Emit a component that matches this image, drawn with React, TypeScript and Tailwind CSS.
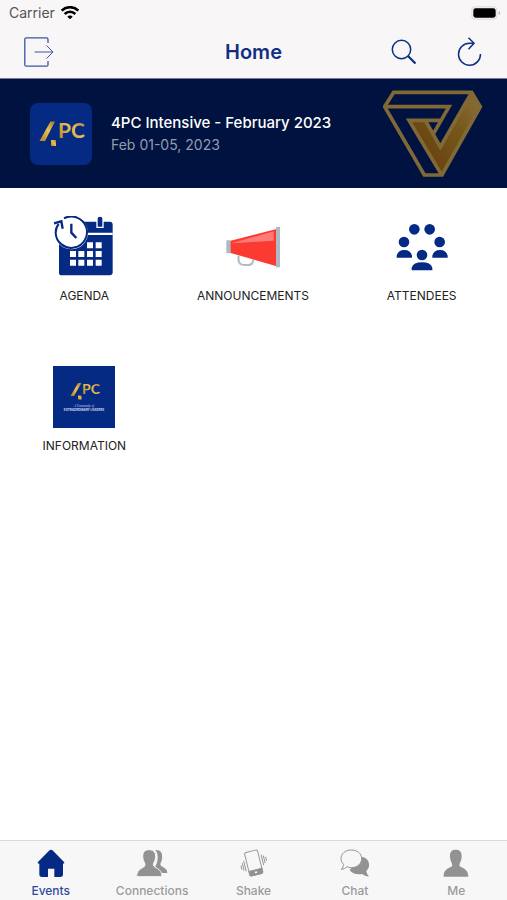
import type { ReactNode } from "react";

function WifiIcon() {
  return (
    <svg viewBox="0 0 54 42" className="h-3.5 w-[18px]" fill="none" stroke="#000" strokeWidth="7.5">
      <path d="M2 14C16 0 38 0 52 14" />
      <path d="M11 24c9-9 23-9 32 0" />
      <path d="M27 40l-8-8c4-5 12-5 16 0z" fill="#000" stroke="none" />
    </svg>
  );
}

function BatteryIcon() {
  return (
    <svg viewBox="0 0 90 42" className="h-3.5 w-[30px]">
      <rect x="1" y="1" width="78" height="40" rx="12" fill="#dededd" />
      <rect x="4" y="4" width="72" height="34" rx="10" fill="#f4f2f3" />
      <rect x="7" y="7" width="67" height="28" rx="7" fill="#000" />
      <path d="M83 15c6 2 6 10 0 12z" fill="#b5b5b5" />
    </svg>
  );
}

function LeaveIcon() {
  return (
    <svg viewBox="0 0 30 30" className="h-[30px] w-[30px]" fill="none" stroke="#3d54a3" strokeWidth="1.3">
      <path d="M24 6V2.500C24 1.300 23.500.8 22.500.8H2.300C1.300.8.8 1.300.8 2.300v25.400c0 1 .5 1.500 1.500 1.500h20.200c1 0 1.500-.5 1.500-1.500V24" />
      <path d="M10.500 15H29M22.500 8.500 29 15l-6.500 6.500" strokeWidth="1" />
    </svg>
  );
}

function SearchIcon() {
  return (
    <svg viewBox="0 0 26 26" className="h-[26px] w-[26px]" fill="none" stroke="#0d2f86">
      <circle cx="10.500" cy="10.500" r="9.200" strokeWidth="1.500" />
      <path d="m17 17 7.500 7.500" strokeWidth="2.200" />
    </svg>
  );
}

function RefreshIcon() {
  return (
    <svg viewBox="0 0 26 30" className="h-[30px] w-[26px]" fill="none" stroke="#0d2f86" strokeWidth="1.500">
      <path d="M23.500 17A11 11 0 1 1 12.500 6.200H17" />
      <path d="m11.500.8 5.500 5.400-5.500 6" />
    </svg>
  );
}

function GoldGradient({ id }: { id: string }) {
  return (
    <linearGradient id={id} x1="0" y1="1" x2="1" y2="0">
      <stop offset="0" stopColor="#b77d1f" />
      <stop offset=".55" stopColor="#eac057" />
      <stop offset="1" stopColor="#a8752a" />
    </linearGradient>
  );
}

function EventLogo() {
  return (
    <svg viewBox="0 0 62 62" className="h-[62px] w-[62px] shrink-0 rounded-lg bg-[#052a84]" role="img" aria-label="4PC">
      <defs>
        <GoldGradient id="gold-event" />
      </defs>
      <g fill="url(#gold-event)">
        <path d="M9.500 38 20.500 18.500H25L15 38z" />
        <path d="M21 37h5v6h-5z" />
        <text x="28" y="35" fontSize="21" fontWeight="700" fontFamily="Lato, sans-serif">
          PC
        </text>
      </g>
    </svg>
  );
}

function PenroseMark() {
  return (
    <svg viewBox="38 34 300 264" className="h-[88px] w-[100px] shrink-0" fill="none" stroke="#806936" strokeWidth="11">
      <defs>
        <linearGradient id="facet" x1=".2" y1=".7" x2="1" y2="0">
          <stop offset="0" stopColor="#6a4410" />
          <stop offset=".5" stopColor="#765719" />
          <stop offset="1" stopColor="#8a713e" />
        </linearGradient>
      </defs>
      <path d="M304 41 332 84 215 289 116 125h49l45 80z" fill="url(#facet)" stroke="none" />
      <path d="M70 41h234l26 43-115 205h-53L43 84z" />
      <path d="M43 84h193l-46 80" />
      <path d="M304 41 210 205l-45-80" />
      <path d="M212 125h-96l97 162" />
    </svg>
  );
}

function AgendaIcon() {
  return (
    <svg viewBox="40 33 186 186" className="h-[62px] w-[62px]" fill="#052a84">
      <path d="M58 60q0-10 10-10h142q9 0 9 9v143q0 9-9 9H66q-8 0-8-8z" />
      <path d="M58 83h161v7H58z" fill="#fff" />
      <path d="M172 40q0-7 9-7t9 7v27h-18z" stroke="#fff" strokeWidth="4" />
      <circle cx="95" cy="83" r="50" fill="#fff" />
      <path d="M73 40A47 47 0 1 1 48 83q0-15 9-26" fill="none" stroke="#052a84" strokeWidth="6" />
      <path d="m43 55 22-6 4 22" fill="none" stroke="#052a84" strokeWidth="7" />
      <path d="M95 56v27l15 16" fill="none" stroke="#052a84" strokeWidth="7" />
      <path
        d="M142 112h18v18h-18zm26 0h18v18h-18zM91 138h18v18H91zm25 0h18v18h-18zm26 0h18v18h-18zm26 0h18v18h-18zM91 164h18v18H91zm25 0h18v18h-18zm26 0h18v18h-18zm26 0h18v18h-18z"
        fill="#fff"
      />
    </svg>
  );
}

function MegaphoneIcon() {
  return (
    <svg viewBox="95 33 186 186" className="h-[62px] w-[62px]">
      <path d="M145 152q-5 28 18 28h11q14 0 15-16" fill="none" stroke="#aebdc6" strokeWidth="6" />
      <path d="m118 108 141-36v112l-141-41z" fill="#fb3b31" />
      <path d="m123 115 127-36v28z" fill="#ff7d76" />
      <path d="M108 106h13v39h-13zM257 66h12v121h-12z" fill="#adbac5" />
    </svg>
  );
}

function AttendeesIcon() {
  return (
    <svg viewBox="61 33 186 186" className="h-[62px] w-[62px]" fill="#052a84">
      <circle cx="131" cy="73" r="16" />
      <circle cx="177" cy="73" r="16" />
      <circle cx="100" cy="111" r="16" />
      <circle cx="207" cy="111" r="16" />
      <circle cx="154" cy="150" r="16" />
      <path d="M78 158v-6q4-17 23-17t23 17v6zM185 158v-6q4-17 23-17t23 17v6zM123 196v-8q5-16 31-16t31 16v8z" />
    </svg>
  );
}

function InformationIcon() {
  return (
    <svg viewBox="0 0 62 62" className="h-[62px] w-[62px] bg-[#052a84]">
      <defs>
        <GoldGradient id="gold-info" />
      </defs>
      <g fill="url(#gold-info)">
        <path d="m17.500 30 7.500-13h3.500l-7.500 13z" />
        <path d="M25 29.500h3.500v4H25z" />
        <text x="29" y="28" fontSize="14" fontWeight="700" fontFamily="Lato, sans-serif">
          PC
        </text>
      </g>
      <g fill="#d5dcee" textAnchor="middle">
        <text x="31" y="41" fontSize="3" fontStyle="italic" fontFamily="Liberation Serif, serif">
          A Community of
        </text>
        <text x="31" y="45" fontSize="3" fontWeight="700" fontFamily="Inter, sans-serif">
          EXTRAORDINARY LEADERS
        </text>
      </g>
    </svg>
  );
}

function HomeTabIcon() {
  return (
    <svg viewBox="112 42 84 84" className="h-7 w-7" fill="#052a84">
      <path d="M154 44q3 0 6 3l33 34q3 5-3 5v32q0 8-8 8h-18v-25h-19v25h-18q-8 0-8-8V86q-7 0-4-5l33-34q3-3 6-3z" />
    </svg>
  );
}

function ConnectionsTabIcon() {
  return (
    <svg viewBox="411 42 94 84" className="h-7 w-8" fill="#929292">
      <path d="M468 45c16-1 23 9 20 27-1 8-5 11-5 16 0 10 21 8 21 26h-20c-5-10-17-10-18-16 8-11 15-38 2-53z" />
      <path
        d="M449 44c16 0 22 10 19 27-1 8-6 12-6 18 0 12 26 8 26 36h-76c0-28 25-24 25-36 0-6-5-10-6-18-3-17 3-27 18-27z"
        stroke="#f7f7f7"
        strokeWidth="3"
      />
    </svg>
  );
}

function ShakeTabIcon() {
  return (
    <svg viewBox="89 40 86 88" className="h-7 w-7" fill="none" stroke="#929292" strokeWidth="3">
      <g transform="rotate(-14 131 84)">
        <rect x="110" y="46" width="42" height="76" rx="6" />
        <path d="M110 106h42v10q0 6-6 6h-30q-6 0-6-6z" fill="#929292" />
        <path d="M127 114h8" stroke="#f7f7f7" strokeWidth="5" />
        <path d="M102 70v34M96 76v24M90 82v13M160 64v34M166 69v24M172 74v13" />
      </g>
    </svg>
  );
}

function ChatTabIcon() {
  return (
    <svg viewBox="389 42 90 84" className="h-7 w-[30px]" fill="#929292">
      <path d="M452 65c18 2 26 14 24 29-1 7-5 11-8 14 1 7 4 12 8 17-9-1-15-3-20-8-17 3-32-2-38-12z" />
      <path
        d="M423 45c18 0 31 11 31 26s-13 27-31 27c-5 0-9-1-13-3-5 5-10 7-17 8 5-5 6-10 7-15-5-4-8-10-8-17 0-15 13-26 31-26z"
        fill="#f7f7f7"
        stroke="#929292"
        strokeWidth="3"
      />
    </svg>
  );
}

function MeTabIcon() {
  return (
    <svg viewBox="699 42 80 84" className="h-7 w-7" fill="#929292">
      <path d="M738 44c14 0 19 8 18 23-1 12-6 16-7 24 1 9 27 6 27 34h-74c0-28 25-25 26-34-1-8-6-12-7-24-1-15 4-23 17-23z" />
    </svg>
  );
}

function Tile({ label, children }: { label: string; children: ReactNode }) {
  return (
    <a href="#" className="flex h-[150px] flex-col items-center pt-7">
      {children}
      <span className="mt-2 text-xs leading-5 text-[#222]">{label}</span>
    </a>
  );
}

function Tab({ label, active = false, children }: { label: string; active?: boolean; children: ReactNode }) {
  return (
    <a
      href="#"
      aria-current={active ? "page" : undefined}
      className={`flex flex-1 flex-col items-center pt-2 text-xs leading-4 font-medium ${active ? "text-[#3449a0]" : "text-[#9b9b9b]"}`}
    >
      {children}
      <span className="mt-1.5">{label}</span>
    </a>
  );
}

export default function App() {
  return (
    <div className="flex min-h-screen flex-col bg-white font-['Inter',sans-serif]">
      <header className="bg-[#f8f6f7]">
        <div className="flex h-[26px] items-center justify-between pr-1.5 pl-[9px]">
          <div className="flex items-center gap-1.5 text-sm text-[#555]">
            Carrier
            <WifiIcon />
          </div>
          <BatteryIcon />
        </div>
        <div className="grid h-[52px] grid-cols-3 items-center px-6">
          <button type="button" aria-label="Leave event" className="justify-self-start">
            <LeaveIcon />
          </button>
          <h1 className="text-center text-xl font-semibold text-[#102f84]">Home</h1>
          <div className="flex items-center gap-10 justify-self-end">
            <button type="button" aria-label="Search">
              <SearchIcon />
            </button>
            <button type="button" aria-label="Refresh">
              <RefreshIcon />
            </button>
          </div>
        </div>
      </header>

      <section className="flex h-[110px] items-center border-t border-[#777b99] bg-[#001240] pr-6 pl-[30px]">
        <EventLogo />
        <div className="ml-[19px] flex-1 pb-0.5">
          <h2 className="text-[15px] leading-6 font-medium whitespace-nowrap text-white">4PC Intensive - February 2023</h2>
          <p className="text-sm leading-5 text-[#949bae]">Feb 01-05, 2023</p>
        </div>
        <PenroseMark />
      </section>

      <main className="grid flex-1 grid-cols-3 content-start pr-px">
        <Tile label="AGENDA">
          <AgendaIcon />
        </Tile>
        <Tile label="ANNOUNCEMENTS">
          <MegaphoneIcon />
        </Tile>
        <Tile label="ATTENDEES">
          <AttendeesIcon />
        </Tile>
        <Tile label="INFORMATION">
          <InformationIcon />
        </Tile>
      </main>

      <nav aria-label="Main" className="flex h-[60px] border-t border-[#dadada] bg-[#f7f7f7]">
        <Tab label="Events" active>
          <HomeTabIcon />
        </Tab>
        <Tab label="Connections">
          <ConnectionsTabIcon />
        </Tab>
        <Tab label="Shake">
          <ShakeTabIcon />
        </Tab>
        <Tab label="Chat">
          <ChatTabIcon />
        </Tab>
        <Tab label="Me">
          <MeTabIcon />
        </Tab>
      </nav>
    </div>
  );
}
